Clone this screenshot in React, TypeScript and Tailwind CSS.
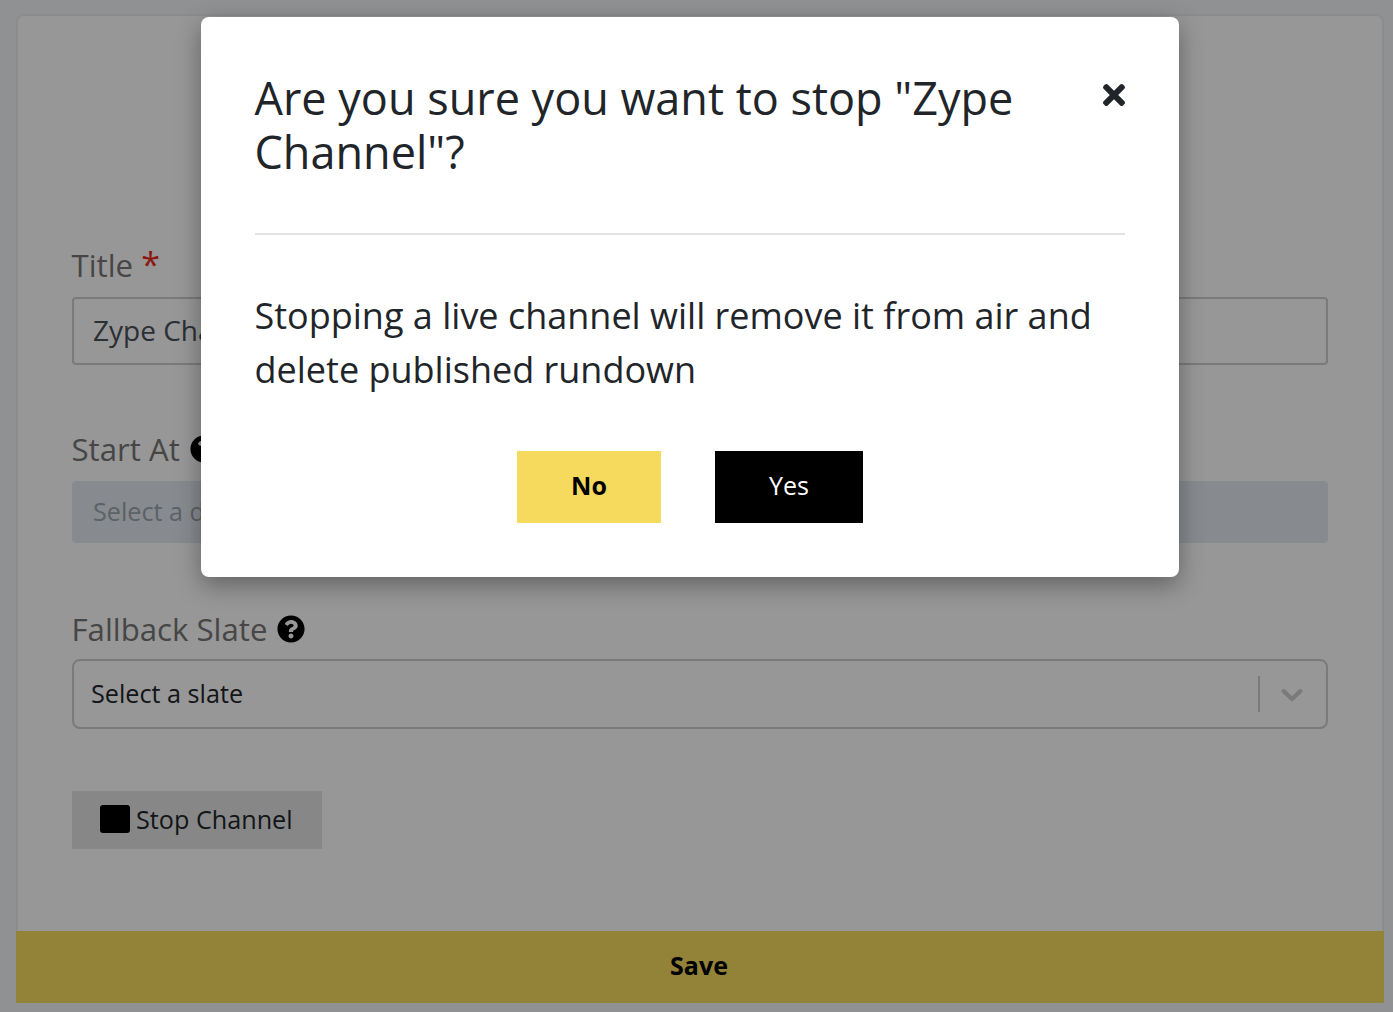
import React from 'react';
import { FaQuestionCircle, FaTimes } from 'react-icons/fa';

const App: React.FC = () => {
  return (
    <div className="relative h-[1012px] overflow-hidden bg-[#f0f2f5] pl-[16px] pr-[9px] pt-[14px] font-['Open_Sans',sans-serif] text-[#212529]">
      {/* Channel form behind the dialog */}
      <div className="flex h-[917px] w-[1368px] flex-col rounded-t-[8px] border-x-2 border-t-2 border-[#e9eaec] bg-[#fcfcfc] pl-[54px] pr-[54px]">
        <form className="flex-1 pt-[228px] text-[31.2px] text-[#757575]">
          <label className="-ml-[0.5px] block h-[53px] leading-[42px]">
            Title <span className="text-[34px] leading-[34px] text-[#e82a1e]">*</span>
          </label>
          <div className="flex h-[68px] items-center rounded-[4px] border-2 border-[#ccc] px-[19px] pb-[2px] text-[28px] text-[#495057]">
            Zype Channel
          </div>

          <label className="mt-[52px] -ml-[0.5px] flex h-[64px] items-center gap-[10px]">
            Start At <FaQuestionCircle className="h-[28px] w-[28px] text-black" />
          </label>
          <div className="flex h-[62px] items-center rounded-[4px] bg-[#e2e8ee] px-[21px] text-[25.2px] text-[#9aa3ab]">
            Select a date
          </div>

          <label className="mt-[56px] -ml-[0.5px] flex h-[60px] items-center gap-[10px]">
            Fallback Slate <FaQuestionCircle className="h-[28px] w-[28px] text-black" />
          </label>
          <div className="flex h-[70px] items-center justify-between rounded-[8px] border-2 border-[#ccc] pl-[17px] text-[25.2px] text-[#212529]">
            Select a slate
            <div className="flex items-center">
              <span className="h-[36px] w-[2px] bg-[#ccc]" />
              <svg viewBox="0 0 20 20" className="ml-[14px] mr-[16px] h-[36px] w-[36px] fill-[#ccc]">
                <path d="M4.516 7.548c0.436-0.446 1.043-0.481 1.576 0l3.908 3.747 3.908-3.747c0.533-0.481 1.141-0.446 1.576 0 0.436 0.445 0.408 1.197 0 1.615-0.406 0.418-4.695 4.502-4.695 4.502-0.217 0.223-0.502 0.335-0.789 0.335s-0.572-0.112-0.791-0.335c0 0-4.287-4.084-4.695-4.502s-0.436-1.17 0-1.615z" />
              </svg>
            </div>
          </div>

          <button type="button" className="mt-[62px] flex h-[58px] w-[250px] items-center gap-[6px] bg-[#e2e2e2] pl-[28px] text-[25.2px] text-[#212529]">
            <svg viewBox="0 0 30 28" className="-mt-[2px] h-[28px] w-[30px] fill-black">
              <rect width="30" height="28" rx="3" />
            </svg>
            Stop Channel
          </button>
        </form>
      </div>
      <button type="button" className="h-[72px] w-[1368px] bg-[#f5da5e] pb-[2px] pr-[2px] text-[25px] font-bold text-black">
        Save
      </button>

      {/* Dialog backdrop */}
      <div className="absolute inset-0 bg-black/40" />

      {/* Confirm dialog */}
      <div className="absolute left-[201px] top-[17px] w-[978px] rounded-[8px] bg-white p-[54px] shadow-[0_8px_24px_rgba(0,0,0,0.35)]">
        <div className="flex items-start justify-between border-b-2 border-[#e2e2e2] pb-[54px]">
          <h2 className="-ml-[0.5px] w-[800px] text-[45px] font-normal leading-[54px]">
            Are you sure you want to stop "Zype Channel"?
          </h2>
          <FaTimes className="mt-[8px] h-[32px] w-[22px] text-[#212529]" />
        </div>
        <p className="-ml-[0.5px] py-[54px] text-[36px] leading-[54px]">
          Stopping a live channel will remove it from air and delete published rundown
        </p>
        <div className="flex justify-center gap-[54px]">
          <button type="button" className="h-[72px] w-[144px] bg-[#f5da5e] pb-[2px] text-[25px] font-bold text-black">No</button>
          <button type="button" className="h-[72px] w-[148px] bg-black pb-[2px] text-[25px] text-white">Yes</button>
        </div>
      </div>
    </div>
  );
};

export default App;
